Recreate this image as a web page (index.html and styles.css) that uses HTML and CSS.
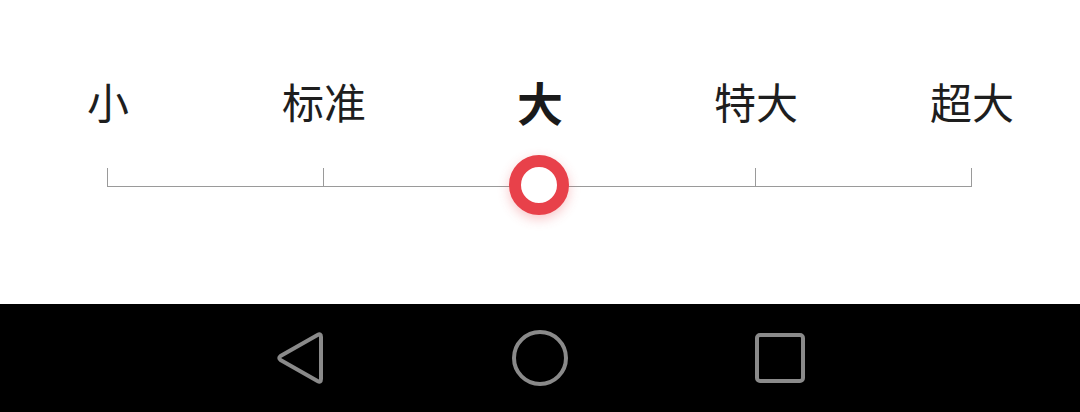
FILE: index.html
```html
<!DOCTYPE html>
<html>
<head>
    <title>字体大小</title>
    <link rel="stylesheet" href="styles.css">
</head>
<body>
    <div class="panel">
        <!-- size labels -->
        <div class="labels">
            <div class="label">小</div>
            <div class="label">标准</div>
            <div class="label active">大</div>
            <div class="label">特大</div>
            <div class="label">超大</div>
        </div>

        <!-- slider track with tick marks -->
        <div class="track">
            <div class="tick"></div>
            <div class="tick"></div>
            <div class="tick tick-hidden"></div>
            <div class="tick"></div>
            <div class="tick"></div>
            <div class="thumb"></div>
        </div>
    </div>

    <div class="navbar">
        <svg class="nav-icon" width="56" height="56" viewBox="0 0 56 56">
            <path d="M49 7 L49 49 Q49 53 45.5 51 L8.5 30 Q6 28 8.5 26 L45.5 5 Q49 3 49 7 Z" fill="none" stroke="#8a8a8a" stroke-width="4" stroke-linejoin="round"/>
        </svg>
        <svg class="nav-icon" width="56" height="56" viewBox="0 0 56 56">
            <circle cx="28" cy="28" r="26" fill="none" stroke="#8a8a8a" stroke-width="4"/>
        </svg>
        <svg class="nav-icon" width="56" height="56" viewBox="0 0 56 56">
            <rect x="5" y="5" width="46" height="46" rx="3" fill="none" stroke="#8a8a8a" stroke-width="4"/>
        </svg>
    </div>
</body>
</html>
```

FILE: styles.css
```css
body {
    margin: 0;
    padding: 0;
    width: 1080px;
    height: 412px;
    overflow: hidden;
    background: #fff;
    font-family: "Noto Sans CJK SC", "Noto Sans", sans-serif;
}

.panel {
    height: 304px;
    background: #fff;
    box-sizing: border-box;
    padding-top: 71px;
}

.labels {
    display: flex;
}

.label {
    width: 216px;
    text-align: center;
    font-size: 42px;
    line-height: 60px;
    color: #1e1e1e;
}

.label.active {
    font-size: 46px;
    font-weight: bold;
    color: #1a1a1a;
}

.track {
    position: relative;
    margin: 37px 108px 0 107px;
    height: 18px;
    border-bottom: 1px solid #9a9a9a;
    display: flex;
    justify-content: space-between;
}

.tick {
    width: 1px;
    height: 18px;
    background: #9a9a9a;
}

.tick-hidden {
    background: transparent;
}

/* selected position marker */
.thumb {
    position: absolute;
    left: 402px;
    top: -13px;
    width: 36px;
    height: 36px;
    border: 12px solid #e8414a;
    border-radius: 50%;
    background: #fff;
    box-shadow: 0 4px 12px rgba(232, 65, 74, 0.3);
}

.navbar {
    height: 108px;
    background: #000;
    display: flex;
    justify-content: center;
    align-items: center;
    gap: 184px;
}

.nav-icon {
    display: block;
}
```
